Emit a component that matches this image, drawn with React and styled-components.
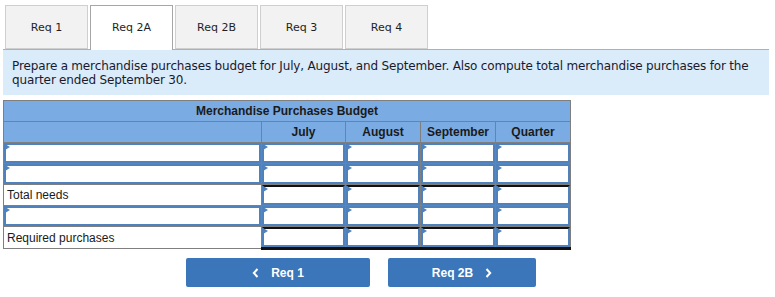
import styled, { createGlobalStyle } from "styled-components";

const GlobalStyle = createGlobalStyle`
    body {
        margin: 0;
        background: #ffffff;
        font-family: "DejaVu Sans", Verdana, sans-serif;
    }
`
const Page = styled.div`
    width: 775px;
    height: 297px;
    padding: 5px 0 0 3px;
    box-sizing: border-box;
`
const TabBar = styled.div`
    display: flex;
    gap: 2px;
    padding-left: 2px;
    height: 44px;
`
const Tab = styled.div`
    width: 83px;
    box-sizing: border-box;
    display: flex;
    align-items: center;
    justify-content: center;
    font-size: 11px;
    color: #1f1f1f;
    background: ${p => p.active ? "#ffffff" : "#f2f2f2"};
    border: 1px solid ${p => p.active ? "#a6a6a6" : "#cfcfcf"};
    border-bottom: ${p => p.active ? "none" : "1px solid #cfcfcf"};
    height: ${p => p.active ? "45px" : "44px"};
    padding-bottom: ${p => p.active ? "2px" : "0"};
    margin-bottom: ${p => p.active ? "-1px" : "0"};
    position: relative;
    z-index: 1;
`
const Prompt = styled.div`
    width: 766px;
    box-sizing: border-box;
    background: #daebf9;
    border-top: 1px solid #b0b0b0;
    padding: 9px 9px 8px 9px;
    font-size: 12px;
    letter-spacing: -0.12px;
    word-spacing: -0.3px;
    line-height: 14px;
    color: #1a1a2e;
`
const Table = styled.table`
    margin-top: 5px;
    border-collapse: collapse;
    font-family: "Liberation Sans", Arial, sans-serif;
    font-size: 12px;
    color: #1a1a1a;
`
const TitleCell = styled.td`
    background: #7aabe3;
    border: 1px solid #7f7f7f;
    height: 20px;
    padding: 0;
    text-align: center;
    font-weight: bold;
`
const HeadCell = styled.td`
    background: #7aabe3;
    border: 1px solid #7f7f7f;
    height: 20px;
    padding: 0;
    text-align: center;
    font-weight: bold;
    width: ${p => p.w}px;
`
const LabelCell = styled.td`
    border: 1px solid #7f7f7f;
    height: 20px;
    padding: 0 0 0 3px;
    background: #ffffff;
`
const FieldCell = styled.td`
    border: 1px solid #7f7f7f;
    height: 20px;
    padding: 0;
    background: #ffffff;
    vertical-align: top;
    border-bottom: ${p => p.last ? "3px solid #111111" : "1px solid #7f7f7f"};
`
const Field = styled.div`
    position: relative;
    height: 20px;
    box-sizing: border-box;
    border: 2px solid #4f81bd;
    border-top: ${p => p.total ? "2px solid #111111" : "2px solid #4f81bd"};
    background: #ffffff;
`
const Marker = styled.span`
    position: absolute;
    left: -1px;
    top: -1px;
    width: 0;
    height: 0;
    border-top: 3px solid transparent;
    border-bottom: 3px solid transparent;
    border-left: 5px solid #4f81bd;
`
const ButtonRow = styled.div`
    display: flex;
    gap: 18px;
    margin: 8px 0 0 183px;
`
const NavButton = styled.div`
    width: ${p => p.w}px;
    height: 29px;
    background: #3a76b9;
    border-radius: 2px;
    color: #ffffff;
    font-family: "Liberation Sans", Arial, sans-serif;
    font-weight: bold;
    font-size: 12px;
    display: flex;
    align-items: center;
    justify-content: center;
    gap: 12px;
`

const Chevron = ({dir}) => (
    <svg width="7" height="10" viewBox="0 0 7 10">
        <path
            d={dir === "left" ? "M5.5 1 L1.8 5 L5.5 9" : "M1.5 1 L5.2 5 L1.5 9"}
            fill="none"
            stroke="#ffffff"
            strokeWidth="2"
        />
    </svg>
)

const InputBox = ({total}) => (
    <Field total={total}>
        <Marker />
    </Field>
)

const rows = [
    { label: null },
    { label: null },
    { label: "Total needs", total: true },
    { label: null },
    { label: "Required purchases", total: true, last: true },
]

const App = () => {

    return(
        <>
            <GlobalStyle />
            <Page>
                <TabBar>
                    <Tab>Req 1</Tab>
                    <Tab active>Req 2A</Tab>
                    <Tab>Req 2B</Tab>
                    <Tab>Req 3</Tab>
                    <Tab>Req 4</Tab>
                </TabBar>

                <Prompt>
                    Prepare a merchandise purchases budget for July, August, and September. Also compute total merchandise purchases for the quarter ended September 30.
                </Prompt>

                <Table>
                    <tbody>
                        <tr>
                            <TitleCell colSpan={5}>Merchandise Purchases Budget</TitleCell>
                        </tr>
                        <tr>
                            <HeadCell w={257}></HeadCell>
                            <HeadCell w={83}>July</HeadCell>
                            <HeadCell w={74}>August</HeadCell>
                            <HeadCell w={74}>September</HeadCell>
                            <HeadCell w={74}>Quarter</HeadCell>
                        </tr>
                        {rows.map((r, i) => (
                            <tr key={i}>
                                {r.label ? (
                                    <LabelCell>{r.label}</LabelCell>
                                ) : (
                                    <FieldCell>
                                        <InputBox />
                                    </FieldCell>
                                )}
                                {[0, 1, 2, 3].map(c => (
                                    <FieldCell key={c} last={r.last}>
                                        <InputBox total={r.total} />
                                    </FieldCell>
                                ))}
                            </tr>
                        ))}
                    </tbody>
                </Table>

                <ButtonRow>
                    <NavButton w={184}>
                        <Chevron dir="left" />
                        <span>Req 1</span>
                    </NavButton>
                    <NavButton w={148}>
                        <span>Req 2B</span>
                        <Chevron dir="right" />
                    </NavButton>
                </ButtonRow>
            </Page>
        </>
    )
}

export default App;
